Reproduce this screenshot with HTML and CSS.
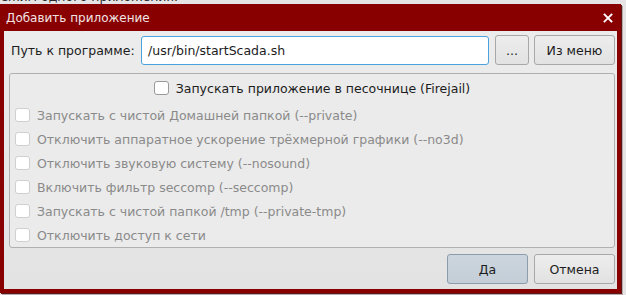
FILE: index.html
```html
<!DOCTYPE html>
<html lang="ru">
<head>
<meta charset="utf-8">
<link rel="stylesheet" href="styles.css">
<title>Добавить приложение</title>
</head>
<body>
<div class="under"><span class="under-text">Режим одного приложения.</span></div>
<div class="window">
  <div class="titlebar">
    <span class="title">Добавить приложение</span>
    <span class="close">
      <svg width="10" height="10" viewBox="0 0 10 10"><path d="M1.5 1.5 L8.5 8.5 M8.5 1.5 L1.5 8.5" stroke="#fff" stroke-width="1.8" stroke-linecap="square"/></svg>
    </span>
  </div>
  <div class="content">
    <div class="path-row">
      <span class="label">Путь к программе:</span>
      <div class="input">/usr/bin/startScada.sh</div>
      <button class="btn btn-dots">...</button>
      <button class="btn btn-menu">Из меню</button>
    </div>
    <div class="group">
      <label class="row row-main"><span class="cb"></span><span>Запускать приложение в песочнице (Firejail)</span></label>
      <label class="row disabled"><span class="cb"></span><span>Запускать с чистой Домашней папкой (--private)</span></label>
      <label class="row disabled"><span class="cb"></span><span>Отключить аппаратное ускорение трёхмерной графики (--no3d)</span></label>
      <label class="row disabled"><span class="cb"></span><span>Отключить звуковую систему (--nosound)</span></label>
      <label class="row disabled"><span class="cb"></span><span>Включить фильтр seccomp (--seccomp)</span></label>
      <label class="row disabled"><span class="cb"></span><span>Запускать с чистой папкой /tmp (--private-tmp)</span></label>
      <label class="row disabled"><span class="cb"></span><span>Отключить доступ к сети</span></label>
    </div>
    <div class="footer">
      <button class="btn btn-ok">Да</button>
      <button class="btn btn-cancel">Отмена</button>
    </div>
  </div>
</div>
</body>
</html>
```

FILE: styles.css
```css
* { box-sizing: border-box; }
html, body {
  margin: 0;
  padding: 0;
}
body {
  width: 626px;
  height: 295px;
  overflow: hidden;
  background: #e6e4e4;
  font-family: "DejaVu Sans", sans-serif;
  font-size: 12.5px;
  color: #1c1c1c;
}
.under {
  height: 4px;
  overflow: hidden;
}
.under-text {
  display: block;
  margin-top: -10px;
  margin-left: -7px;
  line-height: 14px;
  font-size: 12.5px;
  color: #2a2a2a;
}
.window {
  width: 621px;
  background: #880000;
  padding: 0 4px 4px 4px;
  box-shadow: 1px 1px 0 #5a1a1a, 2px 2px 0 #b9a9a9;
}
.titlebar {
  height: 27px;
  display: flex;
  align-items: center;
  justify-content: space-between;
  padding-left: 2px;
  padding-right: 4px;
}
.title {
  color: #f2e4e4;
  font-size: 12px;
}
.close {
  display: flex;
  width: 10px;
  height: 10px;
}
.content {
  height: 258px;
  background: linear-gradient(#ececec, #e3e3e3);
  padding: 4px 2px 5px 5px;
  display: flex;
  flex-direction: column;
}
.path-row {
  display: flex;
  align-items: center;
  height: 30px;
}
.label {
  margin-left: 2px;
  width: 130px;
  flex: none;
}
.input {
  width: 348px;
  height: 29px;
  background: #fff;
  border: 1px solid #4aa3df;
  border-radius: 3px;
  padding-left: 6px;
  display: flex;
  align-items: center;
  color: #1c1c1c;
}
.btn {
  font-family: "DejaVu Sans", sans-serif;
  font-size: 12.5px;
  color: #1c1c1c;
  height: 30px;
  border: 1px solid #a8a8a8;
  border-radius: 3px;
  background: linear-gradient(#ededed, #e2e2e2);
  padding: 0;
}
.btn-dots {
  width: 34px;
  margin-left: 6px;
}
.btn-menu {
  width: 81px;
  margin-left: 5px;
}
.group {
  margin-top: 8px;
  width: 606px;
  border: 1px solid #b0b0b0;
  border-radius: 3px;
  padding: 2px 0 0 5px;
  background: #ebebeb;
  display: flex;
  flex-direction: column;
}
.row {
  display: flex;
  align-items: center;
  gap: 7px;
  height: 24px;
}
.row-main {
  justify-content: center;
  margin-bottom: 3px;
  margin-left: -5px;
}
.cb {
  width: 15px;
  height: 14px;
  background: #fff;
  border: 1px solid #9a9a9a;
  border-radius: 3px;
  flex: none;
}
.disabled {
  color: #8a8a8a;
}
.disabled .cb {
  border-color: #cfcfcf;
}
.footer {
  margin-top: auto;
  display: flex;
  justify-content: flex-end;
  gap: 6px;
}
.btn-ok {
  width: 81px;
  background: linear-gradient(#ccd5dd, #c4ced8);
  border-color: #8c9cad;
}
.btn-cancel {
  width: 81px;
}
```
